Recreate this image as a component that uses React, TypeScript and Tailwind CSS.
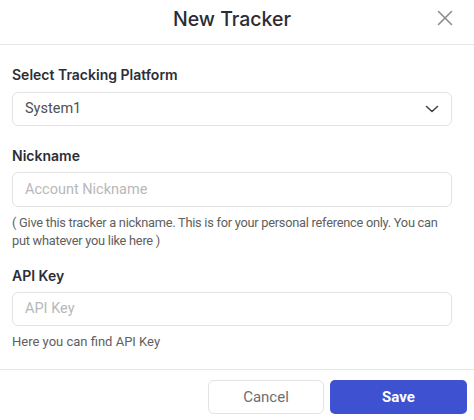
import React from "react";

export default function App() {
  return (
    <div className="w-[474px] h-[420px] bg-white overflow-hidden flex flex-col" style={{ fontFamily: "Roboto, 'Liberation Sans', sans-serif" }}>
      <div className="relative h-[45px] border-b border-[#e6e6e6] flex justify-center pt-[7px] pr-[10px] shrink-0">
        <div className="text-[19.5px] leading-[24px] font-medium text-[#2a2c36]" style={{ fontFamily: "Inter, sans-serif" }}>New Tracker</div>
        <button className="absolute left-[437px] top-[10px] w-[16px] h-[16px] flex items-center justify-center">
          <svg width="16" height="16" viewBox="0 0 16 16" fill="none" stroke="#8c8c8c" strokeWidth="1.6" strokeLinecap="round">
            <path d="M1.5 1.5 L14.5 14.5 M14.5 1.5 L1.5 14.5" />
          </svg>
        </button>
      </div>
      <div className="pl-3 pr-[22px] pt-[20px] flex flex-col">
        <label className="text-[14px] leading-[20px] font-semibold text-[#2c2e38] mb-[7px]" style={{ fontFamily: "Inter, sans-serif" }}>Select Tracking Platform</label>
        <div className="h-[34px] border border-[#e3e3e3] rounded-[6px] flex items-center justify-between pl-3 pr-[12px]">
          <span className="text-[14.5px] text-[#505050]">System1</span>
          <svg width="14" height="8" viewBox="0 0 14 8" fill="none" stroke="#444" strokeWidth="1.6" strokeLinecap="round" strokeLinejoin="round">
            <path d="M1.5 1.5 L7 6.5 L12.5 1.5" />
          </svg>
        </div>
        <label className="mt-[20px] text-[14px] leading-[20px] font-semibold text-[#2c2e38] mb-[6px]" style={{ fontFamily: "Inter, sans-serif" }}>Nickname</label>
        <div className="h-[35px] border border-[#e3e3e3] rounded-[6px] flex items-center pl-3">
          <span className="text-[14.5px] text-[#b8b8b8]">Account Nickname</span>
        </div>
        <p className="mt-[7px] text-[12.8px] leading-[18px] tracking-[-0.25px] text-[#606060]">( Give this tracker a nickname. This is for your personal reference only. You can put whatever you like here )</p>
        <label className="mt-[16px] text-[14px] leading-[20px] font-semibold text-[#2c2e38] mb-[6px]" style={{ fontFamily: "Inter, sans-serif" }}>API Key</label>
        <div className="h-[34px] border border-[#e3e3e3] rounded-[6px] flex items-center pl-3">
          <span className="text-[14.5px] text-[#b8b8b8]">API Key</span>
        </div>
        <p className="mt-[7px] text-[13px] leading-[18px] text-[#606060]">Here you can find API Key</p>
      </div>
      <div className="mt-auto h-[51px] border-t border-[#e6e6e6] flex justify-end items-start pt-[10px] pr-[7px] gap-[6px] shrink-0">
        <button className="w-[116px] h-[34px] border border-[#e3e3e3] rounded-[6px] text-[15px] text-[#6e6e6e]">Cancel</button>
        <button className="w-[137px] h-[34px] rounded-[5px] bg-[#3e51d0] text-white text-[15px] font-bold">Save</button>
      </div>
    </div>
  );
}
